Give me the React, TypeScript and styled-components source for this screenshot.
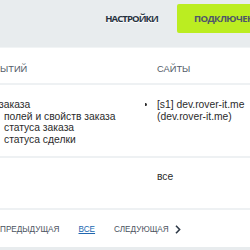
import styled, { createGlobalStyle } from "styled-components";

const Global = createGlobalStyle`
    html, body {
        margin: 0;
        padding: 0;
        background: #e8ecee;
        overflow: hidden;
    }
    body {
        font-family: "Liberation Sans", Arial, sans-serif;
        width: 250px;
        height: 250px;
    }
`

const Toolbar = styled.div`
    display: flex;
    justify-content: flex-end;
    align-items: center;
    height: 29px;
    padding: 4px 0 14px;
    border-bottom: 1px solid #f1f4f5;
`

const ToolLink = styled.a`
    font-family: "Open Sans", sans-serif;
    font-weight: 700;
    font-size: 9.5px;
    letter-spacing: -0.9px;
    color: #27323f;
    text-shadow: 0 1px 0 #fff;
    margin-right: 19px;
    white-space: nowrap;
`

const GreenButton = styled.button`
    flex-shrink: 0;
    height: 29px;
    width: 90px;
    margin-right: -17px;
    border: none;
    border-radius: 2px;
    background: #bbed21;
    font-family: "Open Sans", sans-serif;
    font-weight: 700;
    font-size: 9.5px;
    letter-spacing: -0.6px;
    color: #4f566a;
    text-align: left;
    padding: 0 0 0 17px;
    white-space: nowrap;
    overflow: hidden;
`

const Card = styled.div`
    background: #fff;
`

const Table = styled.table`
    width: 100%;
    border-collapse: collapse;
    table-layout: fixed;
`

const HeadCell = styled.th<{ $width?: number; $pad?: number }>`
    width: ${p => p.$width ? p.$width + "px" : "auto"};
    padding: 15px 0 8px ${p => p.$pad ?? 0}px;
    text-align: left;
    font-weight: 400;
    font-size: 9.3px;
    line-height: 12px;
    color: #535c69;
    border-bottom: 2px solid #eef1f3;
    white-space: nowrap;
    overflow: hidden;
`

const Cell = styled.td<{ $pad?: number; $top?: number; $bottom?: number }>`
    vertical-align: top;
    padding: ${p => p.$top ?? 14}px 0 ${p => p.$bottom ?? 11}px ${p => p.$pad ?? 0}px;
    font-size: 10.3px;
    line-height: 11.5px;
    color: #2b2b2b;
    border-bottom: 2px solid #eef1f3;
    white-space: nowrap;
    overflow: hidden;
`

const Line = styled.div<{ $indent?: number }>`
    height: 11.5px;
    margin-left: ${p => p.$indent ?? 0}px;
`

const SiteList = styled.ul`
    margin: 0;
    padding-left: 0;
    list-style: disc outside;
`

const Pager = styled.div`
    display: flex;
    align-items: center;
    height: 34px;
    padding-top: 3px;
    font-size: 8.2px;
    color: #4a5260;
    white-space: nowrap;
`

const PagerLink = styled.span<{ $active?: boolean; $gap?: number }>`
    margin-right: ${p => p.$gap ?? 0}px;
    color: ${p => p.$active ? "#2067b0" : "#4a5260"};
    text-decoration: ${p => p.$active ? "underline" : "none"};
    display: flex;
    align-items: center;
`

export default function App() {
    return (
        <>
            <Global />
            <Toolbar>
                <ToolLink>НАСТРОЙКИ</ToolLink>
                <GreenButton>ПОДКЛЮЧЕНИЕ</GreenButton>
            </Toolbar>
            <Card>
                <Table>
                    <thead>
                        <tr>
                            <HeadCell $width={145}>ЫТИЙ</HeadCell>
                            <HeadCell $pad={12}>САЙТЫ</HeadCell>
                        </tr>
                    </thead>
                    <tbody>
                        <tr>
                            <Cell>
                                <Line $indent={-1}>заказа</Line>
                                <Line $indent={4}>полей и свойств заказа</Line>
                                <Line $indent={4}>статуса заказа</Line>
                                <Line $indent={4}>статуса сделки</Line>
                            </Cell>
                            <Cell $pad={12}>
                                <SiteList>
                                    <li>[s1] dev.rover-it.me<br />(dev.rover-it.me)</li>
                                </SiteList>
                            </Cell>
                        </tr>
                        <tr>
                            <Cell $top={13} $bottom={25}></Cell>
                            <Cell $top={13} $bottom={25} $pad={12}>все</Cell>
                        </tr>
                    </tbody>
                </Table>
                <Pager>
                    <PagerLink $gap={19}>ПРЕДЫДУЩАЯ</PagerLink>
                    <PagerLink $gap={19} $active>ВСЕ</PagerLink>
                    <PagerLink>
                        СЛЕДУЮЩАЯ
                        <svg width="6" height="9" viewBox="0 0 6 9" style={{ marginLeft: 6 }}>
                            <path d="M1 0.8 L4.6 4.5 L1 8.2" fill="none" stroke="#2f3a48" strokeWidth="1.6" />
                        </svg>
                    </PagerLink>
                </Pager>
            </Card>
        </>
    )
}
